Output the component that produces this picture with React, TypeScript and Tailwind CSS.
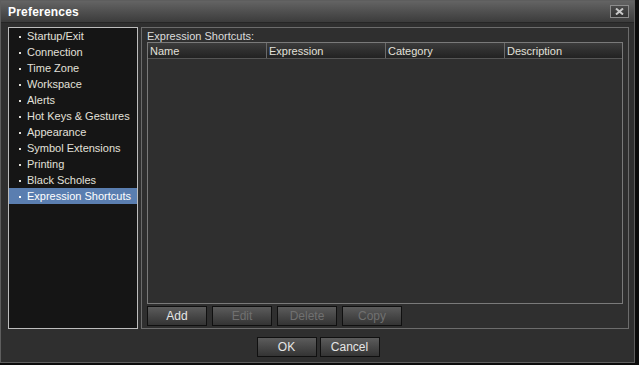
import React from 'react';

const sections = [
  'Startup/Exit',
  'Connection',
  'Time Zone',
  'Workspace',
  'Alerts',
  'Hot Keys & Gestures',
  'Appearance',
  'Symbol Extensions',
  'Printing',
  'Black Scholes',
  'Expression Shortcuts',
];

const columns = [
  { label: 'Name', w: 'w-[119px]' },
  { label: 'Expression', w: 'w-[119px]' },
  { label: 'Category', w: 'w-[119px]' },
  { label: 'Description', w: 'flex-1' },
];

const Btn: React.FC<{ label: string; disabled?: boolean }> = ({ label, disabled }) => (
  <div
    className={`w-[60px] h-[20px] flex items-center justify-center border border-[#101010] bg-gradient-to-b from-[#5c5c5c] to-[#343434] text-[12px] leading-none ${
      disabled ? 'text-[#707070]' : 'text-[#e6e6e6]'
    }`}
  >
    {label}
  </div>
);

export default function App() {
  const selected = 'Expression Shortcuts';
  return (
    <div className="w-[639px] h-[365px] bg-[#0c0c0c] overflow-hidden font-['Liberation_Sans',Arial,sans-serif]">
      <div className="w-[635px] h-[363px] flex flex-col bg-[#2f2f2f] border border-[#5e5e5e]">
        {/* Title bar */}
        <div className="h-[22px] flex items-center justify-between pl-[7px] pr-[5px] bg-gradient-to-b from-[#646464] to-[#3c3c3c] border-b border-[#262626]">
          <span className="text-[12px] font-bold text-white tracking-[0.2px]">Preferences</span>
          <div className="w-[19px] h-[13px] border border-[#8c8c8c] bg-gradient-to-b from-[#4a4a4a] to-[#333] flex items-center justify-center">
            <svg width="9" height="7" viewBox="0 0 9 7">
              <path d="M1 0.5 L8 6.5 M8 0.5 L1 6.5" stroke="#c8c8c8" strokeWidth="2" />
            </svg>
          </div>
        </div>

        {/* Body */}
        <div className="flex gap-[3px] pl-[7px] pt-[4px]">
          <div className="w-[130px] h-[302px] border border-[#bdbdbd] bg-[#151515]">
            {sections.map((s) => (
              <div
                key={s}
                className={`h-[16px] flex items-center pt-[1px] text-[11px] leading-none ${
                  s === selected ? 'bg-[#5a7eb0] text-white' : 'text-[#e2e0da]'
                }`}
              >
                <span className="w-[2px] h-[2px] bg-current ml-[10px] mr-[6px]" />
                {s}
              </div>
            ))}
          </div>

          <div className="w-[488px] h-[302px] border border-[#6c6c6c] flex flex-col pl-[5px] pr-[5px]">
            <div className="h-[14px] flex items-center text-[11px] text-[#dcdcdc] leading-none pt-[2px]">
              Expression Shortcuts:
            </div>
            <div className="h-[262px] border border-[#7a7a7a] bg-[#2f2f2f] flex flex-col">
              <div className="h-[16px] flex bg-gradient-to-b from-[#3c3c3c] to-[#222] border-b border-[#555]">
                {columns.map((c, i) => (
                  <div
                    key={c.label}
                    className={`${c.w} h-full flex items-center pl-[2px] pt-[1px] text-[11px] text-[#e2e0da] leading-none ${
                      i < columns.length - 1 ? 'border-r border-[#6a6a6a]' : ''
                    }`}
                  >
                    {c.label}
                  </div>
                ))}
              </div>
            </div>
            <div className="flex gap-[5px] mt-[2px]">
              <Btn label="Add" />
              <Btn label="Edit" disabled />
              <Btn label="Delete" disabled />
              <Btn label="Copy" disabled />
            </div>
          </div>
        </div>

        <div className="flex justify-center gap-[3px] mt-[8px] pl-[1px]">
          <Btn label="OK" />
          <Btn label="Cancel" />
        </div>
      </div>
    </div>
  );
}
